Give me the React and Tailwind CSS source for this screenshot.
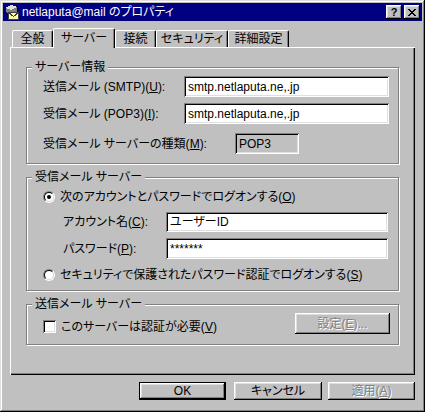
import React from "react";

const FONT = "font-['Liberation_Sans','Noto_Sans_CJK_JP',sans-serif] [font-feature-settings:'palt']";
const RAISED = "shadow-[inset_-1px_-1px_0_#000,inset_1px_1px_0_#fff,inset_-2px_-2px_0_#808080,inset_2px_2px_0_#dfdfdf]";
const SUNKEN = "shadow-[inset_1px_1px_0_#808080,inset_-1px_-1px_0_#fff,inset_2px_2px_0_#000,inset_-2px_-2px_0_#dfdfdf]";
const DISABLED = "text-[#808080] [text-shadow:1px_1px_0_#fff]";

const X_ROWS = ["11....11", ".11..11.", "..1111..", "...11...", "..1111..", ".11..11.", "11....11"];

function Mn({ children }) {
    return <u className="underline underline-offset-[1px]">{children}</u>;
}

function MailIcon() {
    return (
        <svg width="16" height="16" viewBox="0 0 16 16" shapeRendering="crispEdges">
            <polygon points="1,4 7,1 13,3 13,8 7,11 1,8" fill="#808080" stroke="#000" strokeWidth="0.8" />
            <polygon points="1,4 7,1 13,3 7,6" fill="#dfdfdf" />
            <rect x="4.5" y="8.5" width="10" height="7" fill="#ffffa0" stroke="#404040" />
            <polyline points="4.5,8.5 9.5,12.5 14.5,8.5" fill="none" stroke="#404040" />
        </svg>
    );
}

function CloseGlyph() {
    return (
        <svg width="8" height="7" viewBox="0 0 8 7" shapeRendering="crispEdges">
            {X_ROWS.map((row, y) =>
                row.split("").map((c, x) => (c === "1" ? <rect key={`${x}-${y}`} x={x} y={y} width="1" height="1" fill="#000" /> : null))
            )}
        </svg>
    );
}

function TitleBar() {
    return (
        <div className="h-[18px] bg-[#000080] flex items-center pl-[1px] pr-[2px]">
            <MailIcon />
            <span className="ml-[2px] text-white text-[12px] leading-[14px] whitespace-nowrap">netlaputa@mail のプロパティ</span>
            <div className="ml-auto flex gap-[2px]">
                <div className={`w-[16px] h-[14px] bg-[#c0c0c0] flex items-center justify-center ${RAISED}`}>
                    <span className="font-bold text-[11px] leading-[11px] text-black">?</span>
                </div>
                <div className={`w-[16px] h-[14px] bg-[#c0c0c0] flex items-center justify-center ${RAISED}`}>
                    <CloseGlyph />
                </div>
            </div>
        </div>
    );
}

function Tab({ label, width, active }) {
    if (active) {
        return (
            <div
                className="relative z-10 -mb-[1px] h-[20px] bg-[#c0c0c0] border-l border-t border-r border-white border-r-black rounded-t-[2px] shadow-[inset_-1px_0_0_#808080] flex items-center justify-center pb-[2px] whitespace-nowrap"
                style={{ width }}
            >
                {label}
            </div>
        );
    }
    return (
        <div
            className="h-[17px] border-l border-t border-r border-white border-r-black rounded-t-[2px] shadow-[inset_-1px_0_0_#808080] flex items-center justify-center whitespace-nowrap"
            style={{ width }}
        >
            {label}
        </div>
    );
}

function Field({ width, height = 21, children }) {
    return (
        <div className={`bg-white flex items-center pl-[4px] ${SUNKEN}`} style={{ width, height }}>
            {children}
        </div>
    );
}

function Group({ title, height, className = "", children }) {
    return (
        <div
            className={`relative border border-[#808080] shadow-[1px_1px_0_#fff,inset_1px_1px_0_#fff] ${className}`}
            style={{ height }}
        >
            <span className="absolute left-[5px] top-[-8px] bg-[#c0c0c0] px-[3px] leading-[14px] whitespace-nowrap">{title}</span>
            {children}
        </div>
    );
}

function Radio({ checked }) {
    return (
        <div className="w-[12px] h-[12px] shrink-0 rounded-full border border-t-[#808080] border-l-[#808080] border-b-white border-r-white">
            <div className="w-[10px] h-[10px] rounded-full border border-t-black border-l-black border-b-[#dfdfdf] border-r-[#dfdfdf] bg-white flex items-center justify-center">
                {checked && <div className="w-[4px] h-[4px] rounded-full bg-black" />}
            </div>
        </div>
    );
}

function Button({ width, children, isDefault, disabled }) {
    if (isDefault) {
        return (
            <div className="h-[18px] border border-black" style={{ width }}>
                <div className={`h-full flex items-center justify-center ${RAISED}`}>{children}</div>
            </div>
        );
    }
    return (
        <div className={`h-[18px] flex items-center justify-center ${RAISED} ${disabled ? DISABLED : ""}`} style={{ width }}>
            {children}
        </div>
    );
}

export default function App() {
    return (
        <div className={`w-[425px] h-[412px] bg-[#c0c0c0] p-[3px] text-[12px] leading-[14px] text-black ${FONT} shadow-[inset_-1px_-1px_0_#000,inset_1px_1px_0_#dfdfdf,inset_-2px_-2px_0_#808080,inset_2px_2px_0_#fff]`}>
            <TitleBar />
            <div className="px-[7px]">
                {/* tabs */}
                <div className="mt-[7px] h-[19px] ml-[2px] flex items-end">
                    <Tab label="全般" width={41} />
                    <Tab label="サーバー" width={62} active />
                    <Tab label="接続" width={41} />
                    <Tab label="セキュリティ" width={72} />
                    <Tab label="詳細設定" width={61} />
                </div>

                {/* panel */}
                <div className="h-[328px] pt-[20px] px-[16px] shadow-[inset_1px_1px_0_#fff,inset_-1px_-1px_0_#000,inset_-2px_-2px_0_#808080]">
                    <Group title="サーバー情報" height={97}>
                        <div className="pl-[16px] pt-[8px]">
                            <div className="flex items-center h-[21px]">
                                <span className="w-[141px]">送信メール (SMTP)(<Mn>U</Mn>):</span>
                                <Field width={205}>smtp.netlaputa.ne,.jp</Field>
                            </div>
                            <div className="mt-[6px] flex items-center h-[21px]">
                                <span className="w-[141px]">受信メール (POP3)(<Mn>I</Mn>):</span>
                                <Field width={205}>smtp.netlaputa.ne,.jp</Field>
                            </div>
                            <div className="mt-[9px] flex items-center h-[21px]">
                                <span className="w-[192px]">受信メール サーバーの種類(<Mn>M</Mn>):</span>
                                <div className={`w-[64px] h-[21px] flex items-center pl-[4px] ${SUNKEN}`}>POP3</div>
                            </div>
                        </div>
                    </Group>

                    <Group title="受信メール サーバー" height={114} className="mt-[13px]">
                        <div className="pl-[16px] pt-[12px]">
                            <div className="flex items-center h-[14px]">
                                <Radio checked />
                                <span className="ml-[5px] whitespace-nowrap">次のアカウントとパスワードでログオンする(<Mn>O</Mn>)</span>
                            </div>
                            <div className="mt-[8px] flex items-center h-[20px]">
                                <span className="ml-[20px] w-[103px]">アカウント名(<Mn>C</Mn>):</span>
                                <Field width={222} height={20}>ユーザーID</Field>
                            </div>
                            <div className="mt-[6px] flex items-center h-[21px]">
                                <span className="ml-[20px] w-[103px]">パスワード(<Mn>P</Mn>):</span>
                                <Field width={222}>*******</Field>
                            </div>
                            <div className="mt-[9px] flex items-center h-[14px]">
                                <Radio />
                                <span className="ml-[5px] whitespace-nowrap">セキュリティで保護されたパスワード認証でログオンする(<Mn>S</Mn>)</span>
                            </div>
                        </div>
                    </Group>

                    <Group title="送信メール サーバー" height={41} className="mt-[13px]">
                        <div className="pl-[16px] pr-[8px] pt-[8px]">
                            <div className="flex items-end h-[21px]">
                                <div className={`mb-[1px] w-[13px] h-[13px] bg-white ${SUNKEN}`} />
                                <span className="ml-[5px]">このサーバーは認証が必要(<Mn>V</Mn>)</span>
                                <div className={`ml-auto w-[95px] h-[21px] flex items-center justify-center ${RAISED} ${DISABLED}`}>
                                    設定(<Mn>E</Mn>)...
                                </div>
                            </div>
                        </div>
                    </Group>
                </div>

                {/* dialog buttons */}
                <div className="mt-[7px] flex justify-end">
                    <Button width={87} isDefault>OK</Button>
                    <div className="ml-[8px]">
                        <Button width={88}>キャンセル</Button>
                    </div>
                    <div className="ml-[6px]">
                        <Button width={87} disabled>適用(<Mn>A</Mn>)</Button>
                    </div>
                </div>
            </div>
        </div>
    );
}
